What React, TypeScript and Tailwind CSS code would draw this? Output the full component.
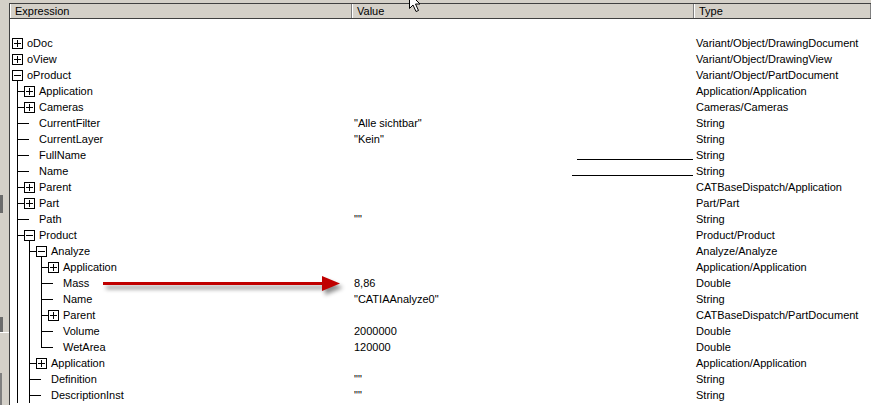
type Kind = "plus" | "minus" | "leaf";

type Row = {
  label?: string;
  level?: number;
  kind?: Kind;
  guides?: boolean[];
  last?: boolean;
  value?: string;
  type?: string;
  line?: number;
};

const L2 = [true];
const L3 = [true, true];

const rows: Row[] = [
  {},
  { label: "oDoc", level: 0, kind: "plus", type: "Variant/Object/DrawingDocument" },
  { label: "oView", level: 0, kind: "plus", type: "Variant/Object/DrawingView" },
  { label: "oProduct", level: 0, kind: "minus", type: "Variant/Object/PartDocument" },
  { label: "Application", level: 1, kind: "plus", type: "Application/Application" },
  { label: "Cameras", level: 1, kind: "plus", type: "Cameras/Cameras" },
  { label: "CurrentFilter", level: 1, kind: "leaf", value: '"Alle sichtbar"', type: "String" },
  { label: "CurrentLayer", level: 1, kind: "leaf", value: '"Kein"', type: "String" },
  { label: "FullName", level: 1, kind: "leaf", line: 116, type: "String" },
  { label: "Name", level: 1, kind: "leaf", line: 121, type: "String" },
  { label: "Parent", level: 1, kind: "plus", type: "CATBaseDispatch/Application" },
  { label: "Part", level: 1, kind: "plus", type: "Part/Part" },
  { label: "Path", level: 1, kind: "leaf", value: '""', type: "String" },
  { label: "Product", level: 1, kind: "minus", type: "Product/Product" },
  { label: "Analyze", level: 2, kind: "minus", guides: L2, type: "Analyze/Analyze" },
  { label: "Application", level: 3, kind: "plus", guides: L3, type: "Application/Application" },
  { label: "Mass", level: 3, kind: "leaf", guides: L3, value: "8,86", type: "Double" },
  { label: "Name", level: 3, kind: "leaf", guides: L3, value: '"CATIAAnalyze0"', type: "String" },
  { label: "Parent", level: 3, kind: "plus", guides: L3, type: "CATBaseDispatch/PartDocument" },
  { label: "Volume", level: 3, kind: "leaf", guides: L3, value: "2000000", type: "Double" },
  { label: "WetArea", level: 3, kind: "leaf", guides: L3, last: true, value: "120000", type: "Double" },
  { label: "Application", level: 2, kind: "plus", guides: L2, type: "Application/Application" },
  { label: "Definition", level: 2, kind: "leaf", guides: L2, value: '""', type: "String" },
  { label: "DescriptionInst", level: 2, kind: "leaf", guides: L2, value: '""', type: "String" },
];

function Connectors({ row }: { row: Row }) {
  const L = row.level ?? 0;
  const w = 12 * (L + 1);
  const b = 12 * L;
  const guides = row.guides ?? [];
  return (
    <svg width={w} height={16} className="shrink-0" shapeRendering="crispEdges">
      <g stroke="#000" strokeWidth={1} fill="none">
        {guides.map((g, i) =>
          g ? <line key={i} x1={5.5 + 12 * i} y1={0} x2={5.5 + 12 * i} y2={16} /> : null
        )}
        {L > 0 && (
          <>
            <line x1={b - 6.5} y1={0} x2={b - 6.5} y2={row.last ? 9 : 16} />
            <line x1={b - 7} y1={8.5} x2={row.kind === "leaf" ? b + 5 : b} y2={8.5} />
          </>
        )}
        {row.kind !== "leaf" && (
          <>
            <rect x={b + 0.5} y={3.5} width={10} height={10} fill="#fff" />
            <line x1={b + 2} y1={8.5} x2={b + 9} y2={8.5} />
            {row.kind === "plus" && <line x1={b + 5.5} y1={5} x2={b + 5.5} y2={12} />}
          </>
        )}
        {row.kind === "minus" && <line x1={b + 5.5} y1={14} x2={b + 5.5} y2={16} />}
      </g>
    </svg>
  );
}

function TreeRow({ row }: { row: Row }) {
  return (
    <div className="flex h-4 leading-4">
      <div className="flex w-[342px] shrink-0 items-center pl-[2px]">
        {row.label && (
          <>
            <Connectors row={row} />
            <span className="pl-[3px] whitespace-nowrap">{row.label}</span>
          </>
        )}
      </div>
      <div className="flex w-[342px] shrink-0 pl-[2px]">
        {row.value && <span className="whitespace-nowrap">{row.value}</span>}
        {row.line && (
          <div className="ml-auto mr-[1px] flex items-end pb-[3px]">
            <div className="h-px bg-black" style={{ width: row.line }} />
          </div>
        )}
      </div>
      <div className="pl-[2px] whitespace-nowrap">{row.type}</div>
    </div>
  );
}

function HeaderCell({ label, w }: { label: string; w?: string }) {
  return (
    <div
      className={`${w ?? "flex-1"} h-full border-l border-l-white border-r border-r-[#808080] pl-1 leading-[14px]`}
    >
      {label}
    </div>
  );
}

export default function App() {
  return (
    <div
      className="relative flex h-[405px] w-[871px] overflow-hidden bg-[#d4d0c8] text-[11px] text-black"
      style={{ fontFamily: '"Liberation Sans", Arial, sans-serif' }}
    >
      <div className="flex w-[9px] shrink-0 flex-col">
        <div className="h-[195px]" />
        <div className="h-[18px] w-[3px] bg-[#6b6b6b]" />
        <div className="h-[104px]" />
        <div className="h-[15px] w-[3px] bg-[#6b6b6b]" />
        <div className="h-px w-full bg-white" />
        <div className="h-[40px]" />
        <div className="flex-1 w-[2px] bg-[#808080]" />
      </div>
      <div className="mt-[3px] flex flex-1 flex-col border-l border-t border-[#404040] bg-white">
        <div className="flex h-[15px] shrink-0 border-b border-[#404040] bg-[#d4d0c8]">
          <HeaderCell label="Expression" w="w-[342px]" />
          <HeaderCell label="Value" w="w-[342px]" />
          <HeaderCell label="Type" />
        </div>
        <div className="flex flex-col">
          {rows.map((r, i) => (
            <TreeRow key={i} row={r} />
          ))}
        </div>
      </div>

      {/* red annotation arrow */}
      <svg
        width={250}
        height={30}
        className="absolute left-[100px] top-[274px] drop-shadow-[3px_4px_2px_rgba(0,0,0,0.45)]"
      >
        <line x1={3} y1={9.5} x2={225} y2={9.5} stroke="#c00000" strokeWidth={3} />
        <polygon points="222,2 240,9.5 222,17" fill="#c00000" />
      </svg>

      {/* mouse pointer */}
      <svg width={14} height={22} className="absolute left-[408px] top-[-8px]">
        <path d="M1.5,1.5 L1.5,16.5 L5,13 L8,19.5 L10.5,18.5 L7.5,12 L12,12 Z" fill="#fff" stroke="#000" strokeWidth={1} />
      </svg>
    </div>
  );
}
